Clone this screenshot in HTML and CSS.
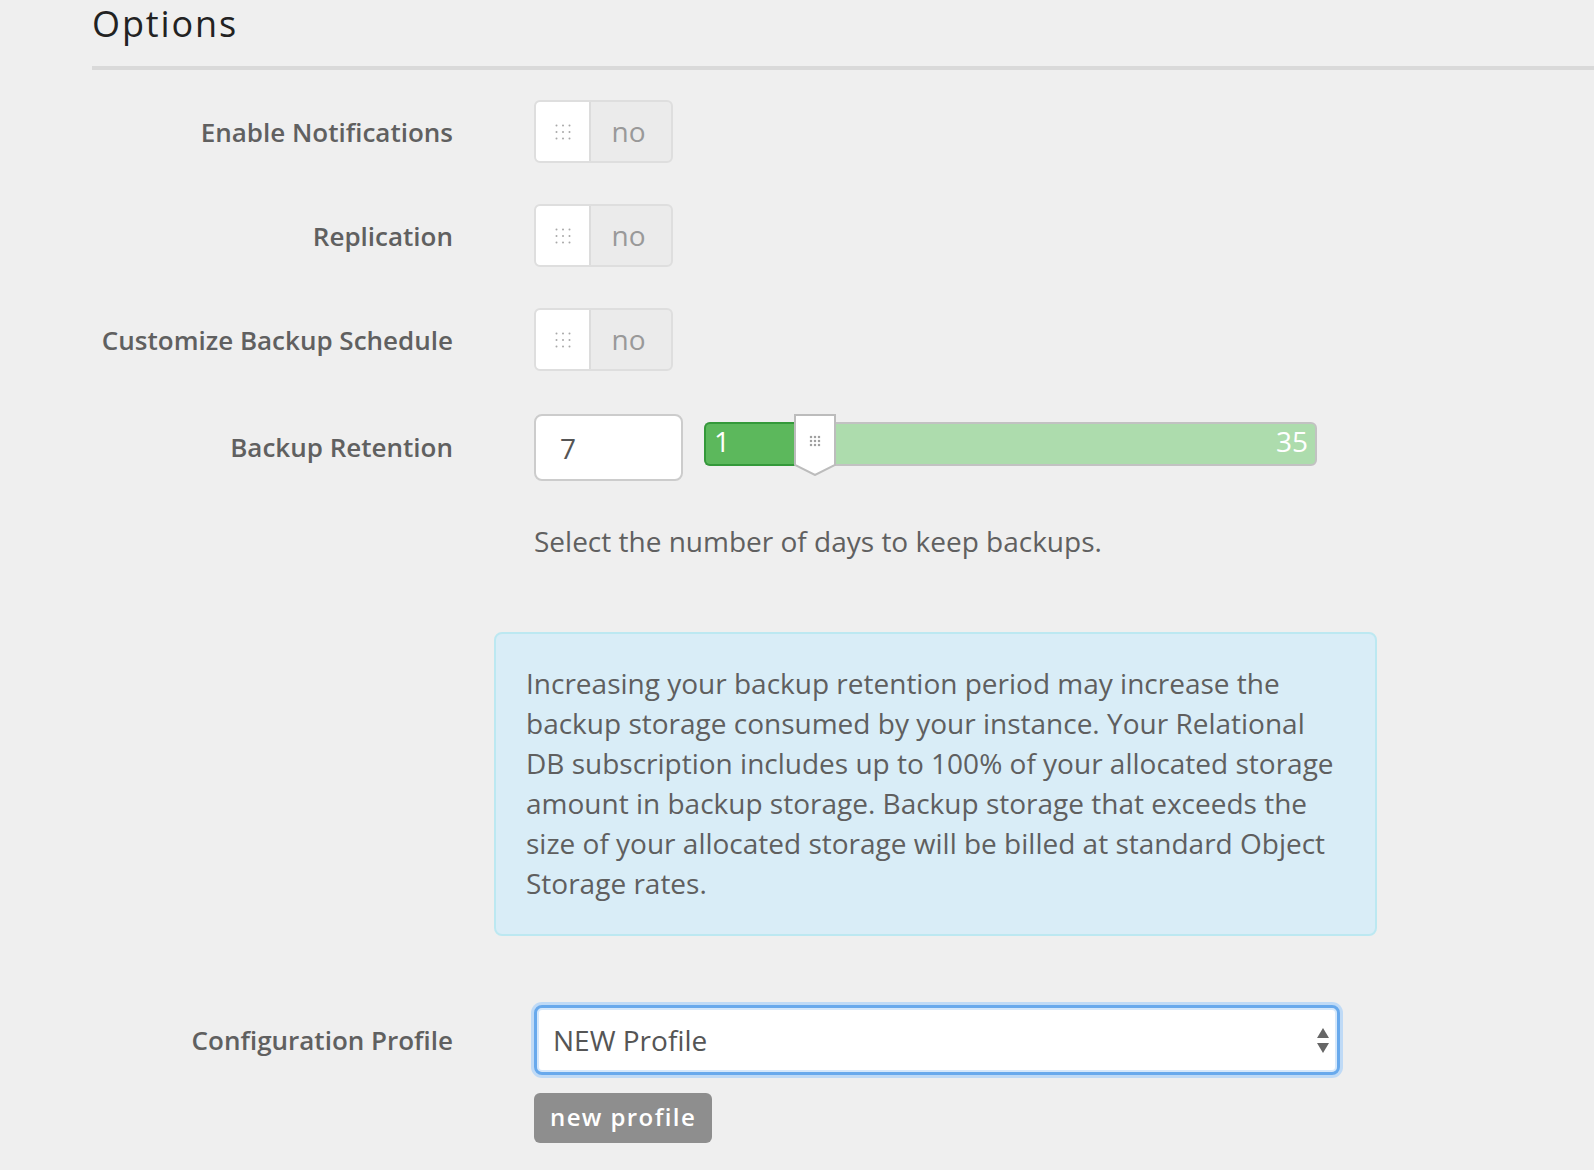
FILE: index.html
```html
<!DOCTYPE html>
<html lang="en">
<head>
<meta charset="utf-8">
<title>Options</title>
<link rel="stylesheet" href="styles.css">
</head>
<body>
<div class="page">
  <h2 class="section-title">Options</h2>
  <div class="form">
    <div class="row">
      <label class="label">Enable Notifications</label>
      <div class="control">
        <div class="toggle">
          <span class="knob"><svg class="grip" width="16" height="16" viewBox="0 0 16 16"><g fill="#a8a8a8"><circle cx="1.5" cy="1.5" r="1"/><circle cx="8" cy="1.5" r="1"/><circle cx="14.5" cy="1.5" r="1"/><circle cx="1.5" cy="8" r="1"/><circle cx="8" cy="8" r="1"/><circle cx="14.5" cy="8" r="1"/><circle cx="1.5" cy="14.5" r="1"/><circle cx="8" cy="14.5" r="1"/><circle cx="14.5" cy="14.5" r="1"/></g></svg></span>
          <span class="state">no</span>
        </div>
      </div>
    </div>
    <div class="row">
      <label class="label">Replication</label>
      <div class="control">
        <div class="toggle">
          <span class="knob"><svg class="grip" width="16" height="16" viewBox="0 0 16 16"><g fill="#a8a8a8"><circle cx="1.5" cy="1.5" r="1"/><circle cx="8" cy="1.5" r="1"/><circle cx="14.5" cy="1.5" r="1"/><circle cx="1.5" cy="8" r="1"/><circle cx="8" cy="8" r="1"/><circle cx="14.5" cy="8" r="1"/><circle cx="1.5" cy="14.5" r="1"/><circle cx="8" cy="14.5" r="1"/><circle cx="14.5" cy="14.5" r="1"/></g></svg></span>
          <span class="state">no</span>
        </div>
      </div>
    </div>
    <div class="row">
      <label class="label">Customize Backup Schedule</label>
      <div class="control">
        <div class="toggle">
          <span class="knob"><svg class="grip" width="16" height="16" viewBox="0 0 16 16"><g fill="#a8a8a8"><circle cx="1.5" cy="1.5" r="1"/><circle cx="8" cy="1.5" r="1"/><circle cx="14.5" cy="1.5" r="1"/><circle cx="1.5" cy="8" r="1"/><circle cx="8" cy="8" r="1"/><circle cx="14.5" cy="8" r="1"/><circle cx="1.5" cy="14.5" r="1"/><circle cx="8" cy="14.5" r="1"/><circle cx="14.5" cy="14.5" r="1"/></g></svg></span>
          <span class="state">no</span>
        </div>
      </div>
    </div>
    <div class="row retention-row">
      <label class="label">Backup Retention</label>
      <div class="control retention">
        <input class="num-input" type="text" value="7">
        <div class="slider">
          <div class="slider-fill" style="width: 92px;"></div>
          <span class="slider-min">1</span>
          <span class="slider-max">35</span>
          <svg class="slider-handle" style="left: 88px;" width="42" height="62" viewBox="0 0 42 62">
            <polygon points="1,1 41,1 41,51 21,61 1,51" fill="#ffffff" stroke="#bcbcbc" stroke-width="2"/>
            <g fill="#a0a0a0"><rect x="15.9" y="21.9" width="2.2" height="2.2"/><rect x="19.9" y="21.9" width="2.2" height="2.2"/><rect x="23.9" y="21.9" width="2.2" height="2.2"/><rect x="15.9" y="25.9" width="2.2" height="2.2"/><rect x="19.9" y="25.9" width="2.2" height="2.2"/><rect x="23.9" y="25.9" width="2.2" height="2.2"/><rect x="15.9" y="29.9" width="2.2" height="2.2"/><rect x="19.9" y="29.9" width="2.2" height="2.2"/><rect x="23.9" y="29.9" width="2.2" height="2.2"/></g>
          </svg>
        </div>
      </div>
    </div>
    <div class="row help-row">
      <span></span>
      <p class="help">Select the number of days to keep backups.</p>
    </div>
  </div>

  <div class="alert">
    Increasing your backup retention period may increase the<br>
    backup storage consumed by your instance. Your Relational<br>
    DB subscription includes up to 100% of your allocated storage<br>
    amount in backup storage. Backup storage that exceeds the<br>
    size of your allocated storage will be billed at standard Object<br>
    Storage rates.
  </div>

  <div class="form profile-form">
    <div class="row">
      <label class="label">Configuration Profile</label>
      <div class="control">
        <div class="select-wrap">
          <select class="select">
            <option>NEW Profile</option>
          </select>
          <svg class="select-arrows" width="12" height="26" viewBox="0 0 12 26"><polygon points="6,0 12,10 0,10" fill="#666"/><polygon points="0,15 12,15 6,25" fill="#666"/></svg>
        </div>
      </div>
    </div>
    <div class="row button-row">
      <span></span>
      <div class="control"><button class="btn" type="button">new profile</button></div>
    </div>
  </div>
</div>
</body>
</html>
```
FILE: styles.css
```css
html, body {
  margin: 0;
  padding: 0;
  background: #efefef;
}
body {
  font-family: "Open Sans", "Liberation Sans", sans-serif;
  color: #606060;
}
.page {
  padding-top: 4px;
}
.section-title {
  margin: 0 0 0 92px;
  padding-bottom: 22px;
  font-size: 36px;
  line-height: 40px;
  font-weight: 400;
  letter-spacing: 1.9px;
  color: #222;
  border-bottom: 4px solid #d9d9d9;
}
.form {
  display: flex;
  flex-direction: column;
  gap: 41px;
  margin-top: 30px;
}
.row {
  display: grid;
  grid-template-columns: 453px 1fr;
  column-gap: 81px;
  align-items: center;
}
.retention-row {
  margin-top: 2px;
}
.help-row {
  margin-top: -1px;
}
.label {
  text-align: right;
  font-size: 26px;
  font-weight: 600;
  color: #606060;
}
.retention-row .label {
  margin-bottom: 2px;
}
.control {
  display: flex;
  align-items: center;
}
.toggle {
  display: flex;
  width: 139px;
  height: 63px;
  box-sizing: border-box;
  border: 2px solid #dedede;
  border-radius: 6px;
  background: #ebebeb;
  overflow: hidden;
}
.knob {
  width: 53px;
  flex: none;
  background: #fff;
  border-right: 2px solid #dcdcdc;
  border-radius: 4px 0 0 4px;
  display: flex;
  align-items: center;
  justify-content: center;
}
.state {
  flex: 1;
  display: flex;
  align-items: center;
  justify-content: center;
  font-size: 28px;
  color: #999;
  padding: 0 5px 2px 0;
}
.retention {
  gap: 21px;
}
.num-input {
  width: 149px;
  height: 67px;
  box-sizing: border-box;
  border: 2px solid #cccccc;
  border-radius: 8px;
  background: #fff;
  padding: 0 0 0 24px;
  font-family: "Open Sans", "Liberation Sans", sans-serif;
  font-size: 28px;
  color: #555;
  outline: none;
}
.slider {
  position: relative;
  width: 613px;
  height: 44px;
  box-sizing: border-box;
  border: 2px solid #c2c2c2;
  border-radius: 6px;
  background: #addcad;
  margin-top: -7px;
}
.slider-fill {
  position: absolute;
  left: -2px;
  top: -2px;
  bottom: -2px;
  box-sizing: border-box;
  background: #5cb85c;
  border: 2px solid #34993a;
  border-right: none;
  border-radius: 6px 0 0 6px;
}
.slider-min, .slider-max {
  position: absolute;
  top: -2px;
  line-height: 38px;
  font-size: 28px;
  color: #fff;
}
.slider-min {
  left: 8px;
}
.slider-max {
  right: 7px;
}
.slider-handle {
  position: absolute;
  top: -10px;
  display: block;
}
.help {
  margin: 0;
  font-size: 28px;
  line-height: 40px;
  color: #606060;
}
.alert {
  margin: 71px 0 0 494px;
  width: 883px;
  box-sizing: border-box;
  padding: 29px 30px 31px;
  border: 2px solid #bce8f1;
  border-radius: 8px;
  background: #d9edf7;
  font-size: 28px;
  line-height: 40px;
  color: #5f5f5f;
  white-space: nowrap;
}
.profile-form {
  margin-top: 69px;
  gap: 18px;
}
.select-wrap {
  position: relative;
  width: 806px;
}
.select {
  display: block;
  width: 100%;
  height: 70px;
  box-sizing: border-box;
  -webkit-appearance: none;
  appearance: none;
  border: 3px solid #68a9ec;
  border-radius: 8px;
  box-shadow: 0 0 0 3px #bfdaf6, inset 0 0 0 2px #d6e8fb;
  background: #fff;
  padding: 0 40px 0 16px;
  font-family: "Open Sans", "Liberation Sans", sans-serif;
  font-size: 28px;
  color: #555;
  outline: none;
}
.select-arrows {
  position: absolute;
  right: 11px;
  top: 23px;
}
.button-row .control {
  align-items: flex-start;
}
.btn {
  height: 50px;
  padding: 0 16px 3px;
  border: none;
  border-radius: 6px;
  background: #8e8e8e;
  color: #fff;
  font-family: "Open Sans", "Liberation Sans", sans-serif;
  font-size: 24px;
  font-weight: 600;
  letter-spacing: 1.4px;
}
```
